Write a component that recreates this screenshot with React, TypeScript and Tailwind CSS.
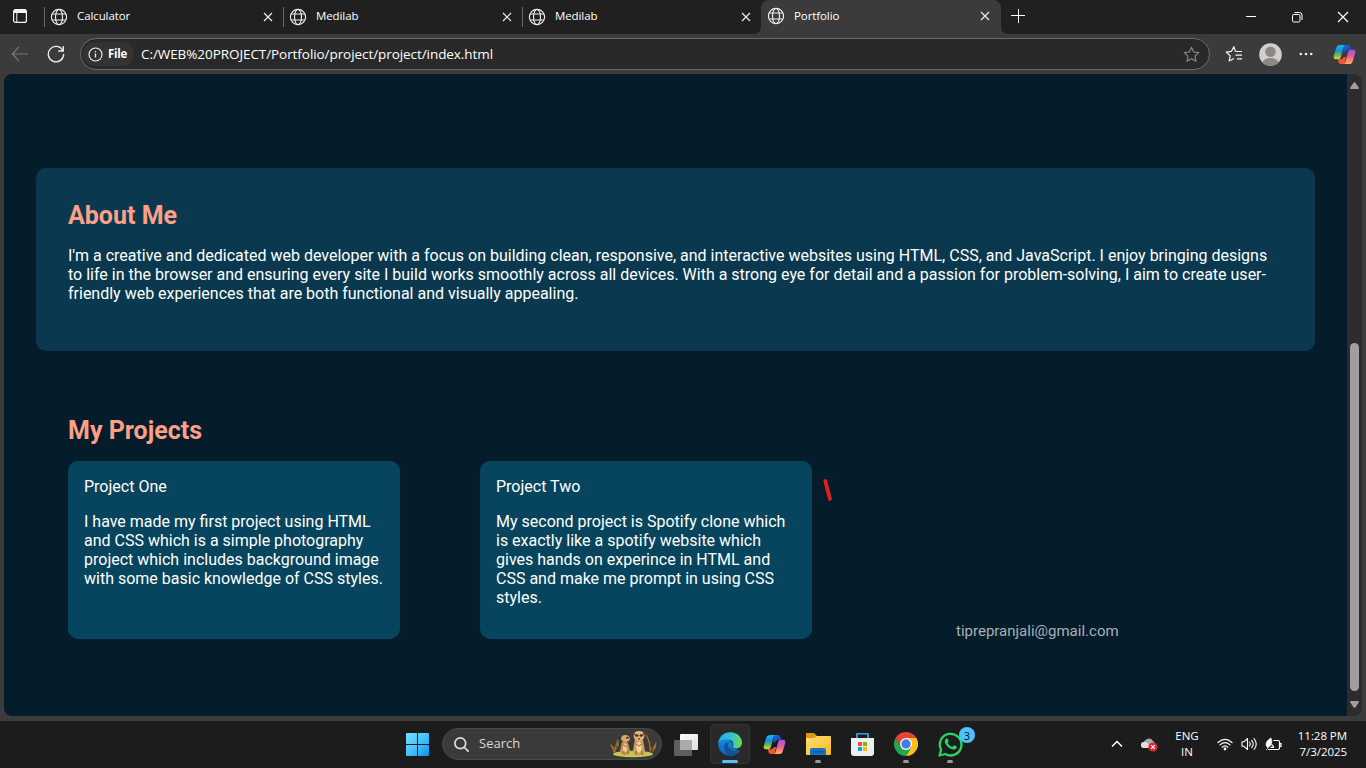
import React from "react";

function Globe() {
  return (
    <svg width="18" height="18" viewBox="0 0 18 18" fill="none" stroke="#f0f0f0" strokeWidth="1.15" className="shrink-0">
      <circle cx="9" cy="9" r="7.6" />
      <ellipse cx="9" cy="9" rx="3.5" ry="7.6" />
      <path d="M2.1 6h13.8M2.1 12h13.800" />
    </svg>
  );
}

function Cross() {
  return (
    <svg width="10" height="10" viewBox="0 0 10 10" stroke="#ececec" strokeWidth="1.2" className="shrink-0">
      <path d="M1 1l8 8M9 1l-8 8" />
    </svg>
  );
}

function Tab({ title, width }: { title: string; width: string }) {
  return (
    <div className={`flex h-[33px] items-center ${width}`}>
      <div className="h-5 w-px bg-[#686868]" />
      <div className="ml-[5px] flex"><Globe /></div>
      <span className="mb-px ml-[9px] flex-1 whitespace-nowrap text-[11.5px] leading-4 tracking-[-0.1px]">{title}</span>
      <div className="mr-[10px] flex"><Cross /></div>
    </div>
  );
}

function CopilotIcon({ id, size }: { id: string; size: number }) {
  const fold = "M12 2h3.700c1.500 0 2.100.8 2.500 2.200l.8 2.800h-2.500c-1.700 0-2.700.7-3.300 2l-2.900.5z";
  const ribbon = "M7.500 2h6C12 2 11.300 3 10.900 4.500L8.200 14.500C7.700 16.300 6.800 17 5 17H3C1 17 .2 15.500.8 13.500l2.500-8.200C4 3 5.200 2 7.500 2z";
  return (
    <svg width={size} height={size} viewBox="0 0 24 24" className="shrink-0">
      <defs>
        <linearGradient id={`${id}a`} x1="0" y1="0" x2="0" y2="1">
          <stop offset="0" stopColor="#22b5f0" /><stop offset=".4" stopColor="#178de0" /><stop offset=".7" stopColor="#5dbb66" /><stop offset="1" stopColor="#f7cf1b" />
        </linearGradient>
        <linearGradient id={`${id}b`} x1="0" y1="1" x2="0" y2="0">
          <stop offset="0" stopColor="#a150eb" /><stop offset=".5" stopColor="#ed5c95" /><stop offset="1" stopColor="#ffb359" />
        </linearGradient>
        <linearGradient id={`${id}c`} x1="0" y1="0" x2="1" y2="1">
          <stop offset="0" stopColor="#156ee2" /><stop offset="1" stopColor="#1e3eb0" />
        </linearGradient>
      </defs>
      <path d={fold} fill={`url(#${id}c)`} />
      <path d={fold} fill="#ef5737" transform="rotate(180 12 12)" />
      <path d={ribbon} fill={`url(#${id}a)`} />
      <path d={ribbon} fill={`url(#${id}b)`} transform="rotate(180 12 12)" />
    </svg>
  );
}

function TabBar() {
  return (
    <div className="flex h-[34px] bg-[#202020] text-white">
      <div className="flex w-11 items-center pb-[2px] pl-[13px]">
        <svg width="14" height="14" viewBox="0 0 14 14" fill="none" stroke="#f5f5f5">
          <rect x=".6" y=".6" width="12.8" height="12.8" rx="2" strokeWidth="1.2" />
          <path d="M1 2.500h12" strokeWidth="3" />
          <path d="M3.800 4v9" />
        </svg>
      </div>
      <Tab title="Calculator" width="w-[239px]" />
      <Tab title="Medilab" width="w-[239px]" />
      <Tab title="Medilab" width="w-[239px]" />
      <div className="relative flex w-[240px] items-center rounded-t-[8px] bg-[#3b3b3b] pb-[2px] pl-1.5">
        <svg className="absolute -left-2 bottom-0" width="8" height="8"><path d="M8 0v8H0Q8 8 8 0" fill="#3b3b3b" /></svg>
        <svg className="absolute -right-2 bottom-0" width="8" height="8"><path d="M0 0v8h8Q0 8 0 0" fill="#3b3b3b" /></svg>
        <Globe />
        <span className="ml-[9px] flex-1 text-[11.5px] leading-4 tracking-[-0.1px]">Portfolio</span>
        <div className="mr-[11px] flex"><Cross /></div>
      </div>
      <svg width="14" height="14" viewBox="0 0 14 14" className="ml-[10px] mt-[9px]" stroke="#fff" strokeWidth="1">
        <path d="M7.500 0v14M0 6.500h14" />
      </svg>
      <div className="ml-auto flex items-center pr-[17px]">
        <svg width="12" height="12" stroke="#fff"><path d="M1 5.500h10" /></svg>
        <svg width="12" height="12" viewBox="0 0 12 12" className="ml-[34px]" fill="none" stroke="#fff">
          <rect x="1.500" y="3.500" width="7.500" height="7.500" rx="1.300" />
          <path d="M3.500 1.500h5a2.500 2.500 0 0 1 2.500 2.500v5" />
        </svg>
        <svg width="12" height="12" viewBox="0 0 12 12" className="ml-[34px]" stroke="#fff" strokeWidth="1.200"><path d="M1 1l10 10M11 1L1 11" /></svg>
      </div>
    </div>
  );
}

const star = "M8.500 1.200l2.200 4.800 5.100.6-3.800 3.500 1 5.200-4.500-2.600L4 15.300l1-5.200L1.200 6.600l5.100-.6z";

function Toolbar() {
  return (
    <div className="flex h-10 items-center bg-[#3b3b3b] text-white">
      <svg width="18" height="16" viewBox="0 0 18 16" className="ml-[11px]" fill="none" stroke="#777" strokeWidth="1.200">
        <path d="M8 1L1.200 8 8 15M1.200 8H17" />
      </svg>
      <svg width="18" height="18" viewBox="0 0 18 18" className="ml-[18px]" fill="none" stroke="#f2f2f2" strokeWidth="1.300">
        <path d="M15.800 5.500A7.700 7.700 0 1 0 16.700 9M16.300 1v5h-5" />
      </svg>
      <div className="ml-[15px] flex h-8 w-[1130px] items-center rounded-full border border-[#6a6a6a] bg-[#292929] pl-[2px]">
        <div className="flex h-6 w-[51px] items-center rounded-full bg-[#333] pl-[5px]">
          <svg width="15" height="15" viewBox="0 0 15 15" fill="none" stroke="#f2f2f2" strokeWidth="1.100">
            <circle cx="7.500" cy="7.500" r="6.500" />
            <path d="M7.500 6.500v4M7.500 4v1.300" strokeWidth="1.300" />
          </svg>
          <span className="ml-[5px] text-[11.5px] font-bold tracking-[-0.3px]">File</span>
        </div>
        <span className="ml-[7px] whitespace-nowrap text-[13.5px] tracking-[-0.07px]">C:/WEB%20PROJECT/Portfolio/project/project/index.html</span>
        <svg width="17" height="17" viewBox="0 0 17 17" className="ml-auto mr-[9px]" fill="none" stroke="#8b8b8b" strokeWidth="1.100" strokeLinejoin="round"><path d={star} /></svg>
      </div>
      <svg width="18" height="18" viewBox="0 0 18 18" className="ml-[15px]" fill="none" stroke="#f2f2f2" strokeWidth="1.200" strokeLinejoin="round">
        <path d="M10.500 6.500L8.800 1.700 6.500 6.300l-5.300.8 4 3.600-1 5.300 4.800-2.500M10.500 6.500H17M10.500 10.200H17M12 13.800h5" />
      </svg>
      <svg width="23" height="23" viewBox="0 0 23 23" className="ml-[15.500px]">
        <clipPath id="avatar"><circle cx="11.500" cy="11.500" r="11.300" /></clipPath>
        <g clipPath="url(#avatar)">
          <path fill="#d3cfca" d="M0 0h23v23H0z" />
          <circle cx="11.500" cy="8.700" r="5.300" fill="#8c8885" />
          <ellipse cx="11.500" cy="20" rx="8" ry="5" fill="#8c8885" />
        </g>
      </svg>
      <svg width="14" height="4" className="ml-[17.500px]" fill="#f2f2f2"><circle cx="1.800" cy="2" r="1.300" /><circle cx="7" cy="2" r="1.300" /><circle cx="12.200" cy="2" r="1.300" /></svg>
      <div className="ml-[20px]"><CopilotIcon id="tb" size={23} /></div>
    </div>
  );
}

function ProjectCard({ title, lines }: { title: string; lines: string[] }) {
  return (
    <div className="h-[178px] w-[332px] rounded-[10px] bg-[#07455e] p-4 text-white">
      <p>{title}</p>
      <p className="mt-4 whitespace-nowrap">
        {lines.map((l) => <span key={l} className="block">{l}</span>)}
      </p>
    </div>
  );
}

function Page() {
  return (
    <div className="flex h-[642px] bg-[#3b3b3b] px-1">
      <main className="w-[1343px] rounded-l-[8px] bg-[#051c2a] px-8 pt-[94px] font-['Roboto',sans-serif] text-[16px] leading-[19px]">
        <section className="h-[183px] w-[1279px] rounded-[10px] bg-[#0a394f] px-8 pt-[33px] text-white">
          <h2 className="text-[25px] font-bold leading-[30px] text-[#ff9f87]">About Me</h2>
          <p className="mt-[15px] whitespace-nowrap">
            I'm a creative and dedicated web developer with a focus on building clean, responsive, and interactive websites using HTML, CSS, and JavaScript. I enjoy bringing designs<br />
            to life in the browser and ensuring every site I build works smoothly across all devices. With a strong eye for detail and a passion for problem-solving, I aim to create user-<br />
            friendly web experiences that are both functional and visually appealing.
          </p>
        </section>
        <section className="px-8 pt-[65px]">
          <h2 className="text-[25px] font-bold leading-[30px] text-[#ff9f87]">My Projects</h2>
          <div className="mt-[15px] flex items-start">
            <ProjectCard title="Project One" lines={["I have made my first project using HTML", "and CSS which is a simple photography", "project which includes background image", "with some basic knowledge of CSS styles."]} />
            <div className="w-20" />
            <ProjectCard title="Project Two" lines={["My second project is Spotify clone which", "is exactly like a spotify website which", "gives hands on experince in HTML and", "CSS and make me prompt in using CSS", "styles."]} />
            <svg width="12" height="24" className="ml-[10px] mt-[17px]"><path d="M3.300 3l4.700 18" stroke="#e51b23" strokeWidth="3.800" strokeLinecap="round" /></svg>
            <p className="ml-[122px] mt-[161px] text-[15px] text-[#a8b0b6]">tiprepranjali@gmail.com</p>
          </div>
        </section>
      </main>
      <div className="flex w-[15px] flex-col items-center rounded-r-[8px] bg-[#2c2c2c] pt-[8px] pb-[8px]">
        <svg width="9" height="7" fill="#9f9f9f"><path d="M3.500.8Q4.500-.5 5.500.8L9 6Q9 7 8 7H1Q0 7 0 6z" /></svg>
        <div className="mt-auto h-[348px] w-[9px] rounded-full bg-[#9f9f9f]" />
        <svg width="9" height="7" className="mt-[10px]" fill="#9f9f9f"><path d="M3.500 6.200Q4.500 7.500 5.500 6.200L9 1Q9 0 8 0H1Q0 0 0 1z" /></svg>
      </div>
    </div>
  );
}

function Meerkats() {
  return (
    <svg width="50" height="28" viewBox="0 0 50 28">
      <ellipse cx="25" cy="24" rx="20" ry="3.300" fill="#c6c850" />
      <g fill="none" stroke="#a87422" strokeWidth="1.200" strokeLinecap="round">
        <path d="M6 22Q5 18 3 15M7 22Q7 17 10 10M42 22Q43 13 38 5M45 21Q45 17 48 13" />
      </g>
      <path d="M2 14l5 4-1 3zM10 10l1 5-3 5zM48 13v5l-4 3zM41 15l3 3-1 3z" fill="#a86c13" />
      <path d="M14 12q3-2 6 1l2 8q0 4-5 4t-5-4z" fill="#c79552" />
      <path d="M27 9q4-2 8 1l2 11q0 4-6 4t-6-4z" fill="#d19d59" />
      <ellipse cx="17" cy="18" rx="2" ry="4.500" fill="#edcd94" />
      <ellipse cx="31" cy="17" rx="2.700" ry="5.500" fill="#f0d49c" />
      <path d="M13 8q1-3.500 5-3 4 .8 4 4-1 3.300-5 3-4-.8-4-4z" fill="#d6a967" />
      <path d="M25.500 5.500q0-4.500 5.500-4.500t5.500 4.500Q36 10.500 31 11q-5-.5-5.500-5.500z" fill="#e2b777" />
      <circle cx="26" cy="4" r="1.200" fill="#7c4b26" /><circle cx="36" cy="4" r="1.200" fill="#7c4b26" />
      <g fill="#4f2730"><ellipse cx="28.700" cy="5.500" rx="1.800" ry="1.200" /><ellipse cx="33.300" cy="5.500" rx="1.800" ry="1.200" /><ellipse cx="19.500" cy="7.800" rx="1.500" ry="1" /><circle cx="31" cy="8.800" r=".9" /></g>
      <path d="M15 15l4 2M28 14l3 2 3-2M16 21v3M20 21v3M28 21v4M34 21v4" stroke="#80502a" strokeWidth=".8" fill="none" />
    </svg>
  );
}

function EdgeIcon() {
  return (
    <svg width="24" height="24" viewBox="0 0 24 24">
      <defs>
        <linearGradient id="ea"><stop offset="0" stopColor="#22a9ee" /><stop offset=".55" stopColor="#2fc5cf" /><stop offset="1" stopColor="#6bd94f" /></linearGradient>
        <linearGradient id="eb" x1="0" y1="0" x2="0" y2="1"><stop offset="0" stopColor="#1689de" /><stop offset="1" stopColor="#1063bd" /></linearGradient>
      </defs>
      <path d="M.2 11C.6 7 5 5.500 9 6l6 5.500-1 4.500 8 2.800C19.800 22 16 24 12 23.800 5.500 23.800.2 18.500.2 12z" fill="url(#eb)" />
      <path d="M8.500 10.500c-4 3-2.700 11.500 4 13.200 4 .3 7.800-2 9.500-5.200.4-.8-.2-1.200-.9-.8-4.500 2.200-8.500.8-10.500-2.200-1-1.600-1-3.500.5-5z" fill="#124f9c" />
      <path d="M.3 11C1 4.500 6 0 12.500.2 19 .3 24 5 24 10.500c0 3.700-2.700 6-6 6-2.500 0-3.900-.8-3.400-1.900 2.400-3.300-.5-7.200-5-7.200C5 7.400 1.500 8.500.3 11z" fill="url(#ea)" />
    </svg>
  );
}

function TaskItem({ children, state }: { children: React.ReactNode; state?: "active" | "open" }) {
  const box = state === "active" ? "border-[#343434] bg-[#292929]" : "border-transparent";
  return (
    <div className={`relative flex h-10 w-10 shrink-0 items-center justify-center rounded-[4px] border ${box}`}>
      {children}
      {state === "active" && <div className="absolute bottom-0 h-[3px] w-4 rounded-full bg-[#4cc2ff]" />}
      {state === "open" && <div className="absolute bottom-0 h-[3px] w-1.5 rounded-full bg-[#9a9a9a]" />}
    </div>
  );
}

function Taskbar() {
  return (
    <div className="flex h-[47px] items-center bg-[#1c1c1c] pb-px text-white">
      <svg width="23" height="23" viewBox="0 0 23 23" className="ml-[406px]">
        <defs><linearGradient id="win" x1="0" y1="0" x2="23" y2="23" gradientUnits="userSpaceOnUse"><stop stopColor="#7bdcff" /><stop offset=".5" stopColor="#45c4fc" /><stop offset="1" stopColor="#0a91ee" /></linearGradient></defs>
        <path fill="url(#win)" d="M1 0h10v11H0V1q0-1 1-1zM12 0h10q1 0 1 1v10H12zM0 12h11v11H1q-1 0-1-1zM12 12h11v10q0 1-1 1H12z" />
      </svg>
      <div className="ml-[13px] flex h-8 w-[220px] items-center rounded-full border border-[#494949] bg-[#3a3a3a] pl-[11px]">
        <svg width="15" height="15" viewBox="0 0 15 15" fill="none" stroke="#dedede" strokeWidth="1.700" strokeLinecap="round"><circle cx="6.300" cy="6.300" r="5.400" /><path d="M10.500 10.500l3.600 3.600" /></svg>
        <span className="ml-[10px] text-[13px] text-[#dadada]">Search</span>
        <div className="ml-auto mr-[3px]"><Meerkats /></div>
      </div>
      <div className="ml-1 flex gap-1">
        <TaskItem>
          <svg width="24" height="23" viewBox="0 0 24 23">
            <defs><linearGradient id="tv" x2="1" y2="1"><stop stopColor="#fff" /><stop offset="1" stopColor="#ddd" /></linearGradient></defs>
            <rect x="6" y="1" width="18" height="16" rx="1" fill="url(#tv)" /><rect y="7" width="18" height="16" rx="1" fill="#5f5f5f" /><path d="M6 7h12v10H6z" fill="#aaa" />
          </svg>
        </TaskItem>
        <TaskItem state="active"><EdgeIcon /></TaskItem>
        <TaskItem><CopilotIcon id="task" size={23} /></TaskItem>
        <TaskItem state="open">
          <svg width="25" height="22" viewBox="0 0 25 22">
            <defs><linearGradient id="fd" x2="1" y2="1"><stop stopColor="#ffdd70" /><stop offset="1" stopColor="#fdbb21" /></linearGradient></defs>
            <path d="M0 1q0-1 1-1h7l3 3h8v6H0z" fill="#d99b12" />
            <path d="M0 5h8l3-2h13q1 0 1 1v17q0 1-1 1H1q-1 0-1-1z" fill="url(#fd)" />
            <path d="M4 22v-5q0-2 2-2h12q2 0 2 2v5z" fill="#1474c4" /><path d="M7 18h10v1.500H7z" fill="#075596" />
          </svg>
        </TaskItem>
        <TaskItem>
          <svg width="23" height="23" viewBox="0 0 23 23">
            <path d="M6 6V1.500q0-1 1-1h9q1 0 1 1V6" fill="none" stroke="#25a8e4" strokeWidth="1.800" />
            <path d="M0 5h23v15q0 3-3 3H3q-3 0-3-3z" fill="#eee" />
            <path d="M7 9h4v4H7z" fill="#f25022" /><path d="M12 9h4v4h-4z" fill="#7fba00" /><path d="M7 14h4v4H7z" fill="#00a4ef" /><path d="M12 14h4v4h-4z" fill="#ffb900" />
          </svg>
        </TaskItem>
        <TaskItem state="open">
          <svg width="24" height="24" viewBox="0 0 24 24">
            <path d="M12 6h10.400A12 12 0 0 1 12 24l5.200-9z" fill="#fbc116" />
            <path d="M1.600 6l5.200 9 5.200 3 5.200-3L12 24A12 12 0 0 1 1.600 6z" fill="#22a650" />
            <path d="M1.600 6A12 12 0 0 1 22.400 6H12l-5.200 9z" fill="#e94335" />
            <circle cx="12" cy="12" r="6" fill="#fff" /><circle cx="12" cy="12" r="4.700" fill="#3b80ed" />
          </svg>
        </TaskItem>
        <TaskItem state="open">
          <svg width="25" height="25" viewBox="0 0 25 25" fill="none">
            <path d="M1.500 23.500l1.600-5.800A10.800 10.800 0 1 1 7.300 22z" stroke="#25d366" strokeWidth="2.300" strokeLinejoin="round" />
            <path d="M8.200 6.600c.5-.5 1.300-.4 1.600.3l.8 2c.2.5-.6 1.300-1 1.800 1 2 2.600 3.400 4.700 4.200l1.300-1.500c.4-.4 2.500.8 2.900 1 .6.4 0 2.100-.8 2.700-3.500 2.200-10.500-3-11-7.500-.1-1 .7-2.200 1.500-3z" fill="#25d366" />
          </svg>
          <span className="absolute right-[2px] top-[2px] flex h-4 w-4 translate-x-2 items-center justify-center rounded-full bg-[#4cc2ff] text-[11px] leading-none text-[#101010]">3</span>
        </TaskItem>
      </div>
      <div className="ml-auto flex items-center">
        <svg width="12" height="8" viewBox="0 0 12 8" fill="none" stroke="#fff" strokeWidth="1.500"><path d="M1 6.500l5-5 5 5" /></svg>
        <svg width="17" height="15" viewBox="0 0 17 15" className="ml-[18px]">
          <path d="M3 11a3 3 0 0 1 0-6 5 5 0 0 1 9-1 4 4 0 0 1 0 7z" fill="#aaa" /><path d="M3 11a3 3 0 0 1 0-6 3 3 0 0 1 3 .5L10 11z" fill="#ddd" />
          <circle cx="12" cy="10" r="4.600" fill="#dc2634" /><path d="M10.200 8.200l3.600 3.600M13.800 8.200l-3.600 3.600" stroke="#fff" strokeWidth="1.200" />
        </svg>
        <div className="ml-[16px] w-[26px] text-center text-[11.5px] leading-4"><div>ENG</div><div>IN</div></div>
        <svg width="16" height="13" viewBox="0 0 16 13" className="ml-[17px]" fill="none" stroke="#fff" strokeWidth="1.200" strokeLinecap="round"><path d="M1 4.500Q8-1.800 15 4.500M3 6.900Q8 2.300 13 6.900M5.200 9.200Q8 6.500 10.800 9.200" /><circle cx="8" cy="11" r=".8" fill="#fff" /></svg>
        <svg width="17" height="14" viewBox="0 0 17 14" className="ml-[8px]" fill="none" stroke="#fff" strokeWidth="1.100" strokeLinecap="round" strokeLinejoin="round"><path d="M1 4.800h2L6.500 1.500v11L3 9.300H1zM8.500 5q1.500 2 0 4M10.700 3.300q3 3.700 0 7.400M13 1.500q4.500 5.500 0 11" /></svg>
        <svg width="17" height="14" viewBox="0 0 17 14" className="ml-[7px]" fill="none" stroke="#fff" strokeWidth="1.200"><path d="M8.500 3.500H13q1.500 0 1.500 1.500v6q0 1.500-1.500 1.500H3M14.500 6.500H16v3h-1.500" /><path d="M1 12.800q2-.8 1.500-2.200C-1 7 2 3.500 6 .8c1 3 1.500 5-.5 7.500l-2 2.300" fill="#fff" strokeWidth=".5" /><path d="M6 8q2-1 2.500 2.300H5.500" /></svg>
        <div className="ml-[8px] mr-[19px] w-[57px] whitespace-nowrap text-right text-[11.500px] leading-4 tracking-[-0.05px]"><div>11:28 PM</div><div>7/3/2025</div></div>
      </div>
    </div>
  );
}

export default function App() {
  return (
    <div className="h-[768px] w-[1366px] overflow-hidden bg-[#3b3b3b] font-['Open_Sans','Noto_Sans',sans-serif]">
      <TabBar />
      <Toolbar />
      <Page />
      <div className="h-[5px] bg-[#3b3b3b]" />
      <Taskbar />
    </div>
  );
}
